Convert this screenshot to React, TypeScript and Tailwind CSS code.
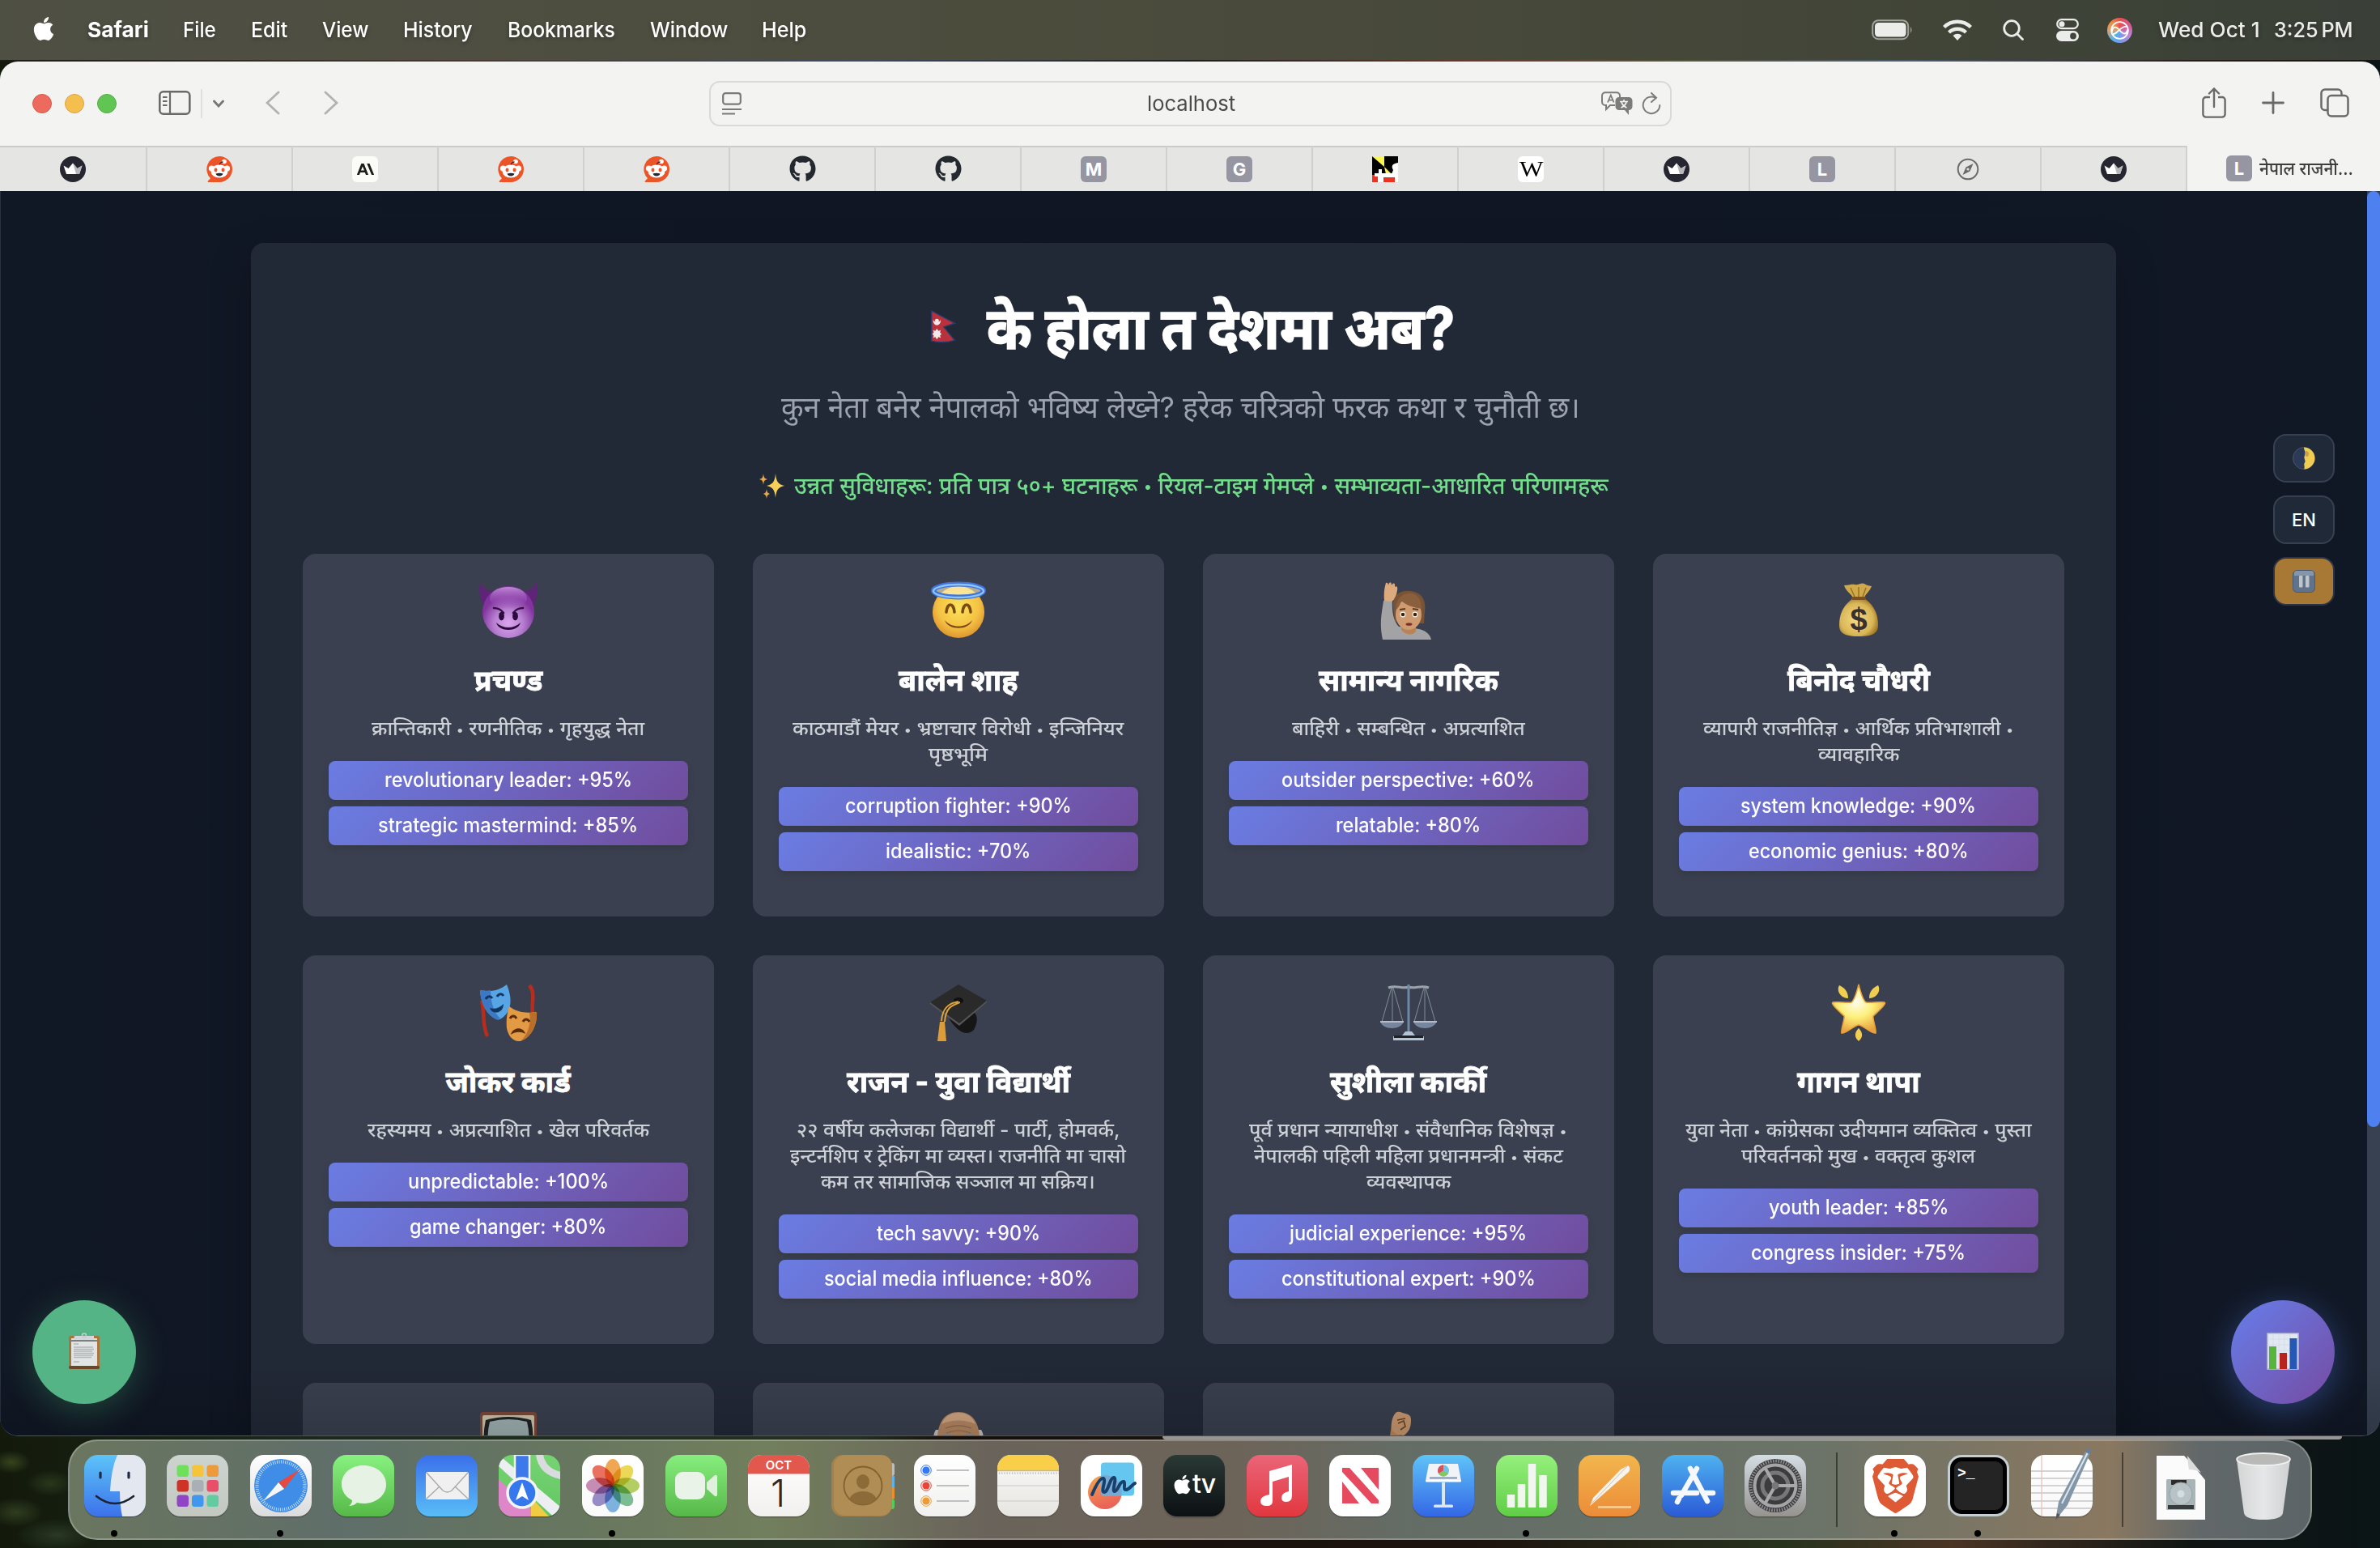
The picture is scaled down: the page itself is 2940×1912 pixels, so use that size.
import { useLayoutEffect, useRef, useState } from "react";
import type { ReactNode } from "react";
import { FaApple, FaGithub } from "react-icons/fa6";
import { SiBrave } from "react-icons/si";

/* Text stretched horizontally so that it fills an exact width. */
function Fit({ w, children, className = "" }: { w: number; children: ReactNode; className?: string }) {
  const ref = useRef<HTMLSpanElement>(null);
  const [k, setK] = useState(1);
  useLayoutEffect(() => {
    if (ref.current) setK(w / ref.current.offsetWidth);
  }, [w]);
  return (
    <span className={`inline-block whitespace-nowrap text-left ${className}`} style={{ width: w }}>
      <span ref={ref} className="inline-block origin-left" style={{ transform: `scaleX(${k})` }}>
        {children}
      </span>
    </span>
  );
}

/* Splits a line at its bullets and sets them smaller than the words. */
function Bulleted({ text }: { text: string }) {
  return (
    <>
      {text.split("•").map((part, i) => (
        <span key={i}>
          {i > 0 && <span className="align-[0.08em] text-[0.68em] leading-none">•</span>}
          {part}
        </span>
      ))}
    </>
  );
}

/* ---------- emoji ---------- */

const Devil = () => (
  <svg viewBox="0 0 72 72" className="size-[72px]">
    <defs>
      <radialGradient id="dv" cx=".5" cy=".72" r=".7">
        <stop offset="0" stopColor="#dba6ee" />
        <stop offset=".4" stopColor="#b67fd0" />
        <stop offset=".75" stopColor="#83349f" />
        <stop offset="1" stopColor="#7c2f9b" />
      </radialGradient>
      <linearGradient id="dvt" x1="0" y1="0" x2="0" y2="1">
        <stop offset="0" stopColor="#c792dd" stopOpacity=".9" />
        <stop offset="1" stopColor="#8a3cab" stopOpacity="0" />
      </linearGradient>
    </defs>
    <path d="M1 1c-2 12 0 23 6 31l16-18C13 13 5 10 1 1zM71 1c2 12 0 23-6 31L49 14c10-1 18-4 22-13z" fill="#5f2478" />
    <circle cx="36" cy="38" r="32" fill="url(#dv)" />
    <ellipse cx="36" cy="21" rx="23" ry="14" fill="url(#dvt)" />
    <path d="M18 33c4 0 9 2 12 6M54 33c-4 0-9 2-12 6" stroke="#341044" strokeWidth="2.6" fill="none" strokeLinecap="round" />
    <ellipse cx="27.500" cy="43" rx="3.400" ry="5.200" fill="#2b0b3b" />
    <ellipse cx="44.500" cy="43" rx="3.400" ry="5.200" fill="#2b0b3b" />
    <path d="M21 51c9 8 21 8 30 0-3 12-27 12-30 0z" fill="#2b0b3b" />
  </svg>
);

const Angel = () => (
  <svg viewBox="0 0 72 72" className="size-[72px] overflow-visible">
    <defs>
      <radialGradient id="an" cx=".5" cy=".4" r=".65">
        <stop offset="0" stopColor="#fbe35a" />
        <stop offset=".6" stopColor="#f5c243" />
        <stop offset="1" stopColor="#d98b2b" />
      </radialGradient>
    </defs>
    <circle cx="36" cy="38" r="32" fill="url(#an)" />
    <ellipse cx="36" cy="12.500" rx="28" ry="7" fill="#fff6c8" fillOpacity=".6" />
    <ellipse cx="36" cy="11.500" rx="31" ry="8" fill="none" stroke="#3f74dd" strokeWidth="6" />
    <ellipse cx="36" cy="12" rx="31" ry="8" fill="none" stroke="#8cc4fb" strokeWidth="2.500" />
    <path d="M21 38c1-12 9-12 10 0M41 38c1-12 9-12 10 0" fill="none" stroke="#7a4a12" strokeWidth="3.600" strokeLinecap="round" />
    <path d="M19 48c8 10 26 10 34 0-4 13-30 13-34 0z" fill="#7a4a12" />
  </svg>
);

const Raising = () => (
  <svg viewBox="0 0 72 72" className="size-[72px]">
    <path d="M4 72C-1 50 4 34 5 24h11c-1 14 2 26 8 32l18 2c12 1 20 5 22 14z" fill="#a3a3a5" />
    <path d="M6 24C5 12 7 6 8 2c2-1 3 1 3 3 1-5 4-5 4 0 2-4 5-3 4 2 2-2 4 0 3 4-1 7-3 12-7 14z" fill="#dcaa7c" />
    <path d="M27 50h18v12c-5 6-14 4-18-2z" fill="#b98358" />
    <path d="M17 34c-2-17 9-24 21-22 14 1 20 11 18 25l-1 15c-8 0-34 2-36-4z" fill="#7a5335" />
    <ellipse cx="36" cy="41" rx="16" ry="19" fill="#cf9b70" />
    <path d="M20 36c4-4 6-8 7-12 6 6 15 8 25 10C52 18 43 14 35 15c-10 1-15 10-15 21z" fill="#8a5f3d" />
    <circle cx="29" cy="41" r="3.400" fill="#fff" /><circle cx="44" cy="41" r="3.400" fill="#fff" />
    <circle cx="29" cy="41" r="2.300" fill="#3a2110" /><circle cx="44" cy="41" r="2.300" fill="#3a2110" />
    <path d="M25 35l7-1M41 34l7 1" stroke="#5c3a1f" strokeWidth="1.800" />
    <ellipse cx="36.500" cy="53" rx="4" ry="1.800" fill="#7b2f2c" />
  </svg>
);

const Money = () => (
  <svg viewBox="0 0 72 72" className="size-[72px]">
    <defs>
      <radialGradient id="mn" cx=".45" cy=".55" r=".6">
        <stop offset="0" stopColor="#f4dd86" />
        <stop offset=".7" stopColor="#d9b657" />
        <stop offset="1" stopColor="#94701f" />
      </radialGradient>
    </defs>
    <path d="M29 21C16 30 12 42 12 54c0 10 6 14 24 14s24-4 24-14c0-12-4-24-17-33z" fill="url(#mn)" />
    <path d="M18 5c6 0 8-2 13-1s9-3 12-1 5 2 9 3c-2 6-7 9-9 14H29C27 16 20 12 18 5z" fill="#cfa94c" />
    <path d="M26 8l5 11M36 7v12M45 8l-4 11" stroke="#94701f" strokeWidth="1.400" />
    <rect x="27" y="19" width="18" height="4" rx="2" fill="#7a4f21" />
    <text x="36" y="60" textAnchor="middle" fontSize="38" fontWeight="700" fontFamily="Liberation Sans, sans-serif" fill="#3a3030">$</text>
  </svg>
);

const Masks = () => (
  <svg viewBox="0 0 72 72" className="size-[72px]">
    <path d="M3 22c4 14 0 28 7 44M62 3c8 10 2 22 4 34" stroke="#b92c1c" strokeWidth="4.500" fill="none" />
    <path d="M1 9c14 3 24 0 33-7 4 10 7 22 2 32-4 8-11 13-15 11C9 39 2 26 1 9z" fill="#58a5e6" />
    <path d="M1 9c5 1 9 1 13 0 0 15 4 28 12 35-2 1-4 1-5 1C9 39 2 26 1 9z" fill="#3c78c4" />
    <path d="M8 20c2-4 6-4 8-1M22 17c2-4 6-4 8-1" stroke="#12365f" strokeWidth="3" fill="none" />
    <path d="M13 31c6 2 12 0 17-5 0 12-14 14-17 5z" fill="#12365f" />
    <path d="M37 29c9 7 20 9 34 7 1 15-6 31-20 36-9 1-15-6-17-16-1-8 0-18 3-27z" fill="#e39a45" />
    <path d="M62 37c3 0 6 0 9-1 1 15-6 31-20 36 10-9 13-22 11-35z" fill="#b96f2a" />
    <path d="M38 44c2-4 6-4 8 0M54 48c2-4 6-4 8 0" stroke="#5a2c0a" strokeWidth="3" fill="none" />
    <path d="M39 64c2-9 15-11 18-1-6-3-12-3-18 1z" fill="#5a2c0a" />
  </svg>
);

const Cap = () => (
  <svg viewBox="0 0 72 72" className="size-[72px]">
    <path d="M19 30l36 6c6 6 4 14 0 22-6 6-13 5-20-1-7-6-14-17-16-27z" fill="#161616" />
    <path d="M1 24L36 2l35 20-34 30z" fill="#2a2a2b" />
    <path d="M1 24l36 26 34-28v2L37 53 1 26z" fill="#555" />
    <ellipse cx="36" cy="22" rx="6" ry="4" fill="#111" />
    <path d="M36 23c-12 2-20 8-21 24M38 24c-12 4-18 8-19 24" stroke="#dca23b" strokeWidth="2" fill="none" />
    <path d="M13 48h6l2 24H10z" fill="#dd9c35" />
  </svg>
);

const Scales = () => (
  <svg viewBox="0 0 72 72" className="size-[72px]">
    <path d="M11 6c10-4 17 2 25-1 8 3 15-3 25 1" stroke="#9aa4ad" strokeWidth="3" fill="none" />
    <path d="M15 6L3 48M16 6l0 42M17 6l12 42M55 6L43 48M56 6v42M57 6l12 42" stroke="#8b96a0" strokeWidth=".9" />
    <path d="M36 2v62" stroke="#6f88a5" strokeWidth="3" />
    <path d="M1 47h29c-2 12-27 12-29 0zM42 47h29c-3 12-27 12-29 0z" fill="#76869f" />
    <path d="M1 47h29v2H1zM42 47h29v2H42z" fill="#b3bcc8" />
    <path d="M32 60h8l4 5 11 1v5H17v-5l11-1z" fill="#b6c3d2" /><path d="M18 65h36v3H18z" fill="#222" />
  </svg>
);

const Star = () => (
  <svg viewBox="0 0 72 72" className="size-[72px]">
    <defs>
      <radialGradient id="st" cx=".45" cy=".35" r=".65">
        <stop offset="0" stopColor="#fffdf0" />
        <stop offset=".5" stopColor="#fdf07c" />
        <stop offset="1" stopColor="#e9a13b" />
      </radialGradient>
    </defs>
    <path d="M36 2c2 8 6 20 9 22 4 1 17-1 23 0 3 2-9 12-14 17-1 4 4 16 3 21-5 1-16-10-21-10s-16 11-21 10c-1-5 4-17 3-21C13 36 1 26 4 24c6-1 19 1 23 0 3-2 7-14 9-22z" fill="url(#st)" stroke="#e9a13b" strokeWidth="1.500" />
    <path d="M12 3c7 3 11 8 11 16C14 19 8 10 12 3zM60 3c-7 3-11 8-11 16 9 0 15-9 11-16zM36 56c5 5 6 11 0 16-6-5-5-11 0-16z" fill="#f1ce4f" />
  </svg>
);

const Tv = () => (
  <svg viewBox="0 0 72 72" className="size-[72px]">
    <rect x="1" y="2" width="70" height="60" rx="4" fill="#7d4738" />
    <rect x="4" y="6" width="64" height="52" rx="2" fill="#cfc2a9" />
    <path d="M8 12q28-8 56 0 5 22 0 46H8Q3 34 8 12z" fill="#1f2426" />
    <path d="M13 14q23-6 46 0 5 20 0 44H13q-5-24 0-44z" fill="#9fb0b1" />
  </svg>
);

const OldMan = () => (
  <svg viewBox="0 0 72 72" className="size-[72px]">
    <path d="M8 24c-4 6-4 16-2 34h60c2-18 2-28-2-34z" fill="#c3c3c5" />
    <path d="M36 2C17 2 9 18 10 40s8 30 26 30 25-8 26-30S55 2 36 2z" fill="#b58863" />
    <path d="M36 3c-11 0-18 6-21 14 12-6 30-6 42 0-3-8-10-14-21-14z" fill="#d1a582" />
    <path d="M20 22c10-4 22-4 32 0M21 28c10-4 20-4 30 0" stroke="#94694a" strokeWidth="1.200" fill="none" />
    <path d="M16 34c3-4 9-4 12-1M56 34c-3-4-9-4-12-1" stroke="#8d8f92" strokeWidth="5" fill="none" />
  </svg>
);

const Fist = () => (
  <svg viewBox="0 0 72 72" className="size-[72px]">
    <path d="M15 18c-3 18-4 34-4 52h14c-1-16 2-26 6-32z" fill="#b98960" />
    <path d="M20 3c4-3 8 0 12 1 5 1 7 3 7 8 0 10-3 15-9 19-7 0-13-3-15-8-1-8 1-15 5-20z" fill="#c9986f" />
    <path d="M23 16l7-3 2 7-6 4M22 12l10-2" stroke="#6b4226" strokeWidth="1.600" fill="none" />
  </svg>
);

const Flag = () => (
  <svg viewBox="0 0 32 44" className="h-[42px] w-[32px]">
    <path d="M1 2L31 18 17 23 31 40Q16 45 1 41z" fill="#b7323c" stroke="#2a3a6b" strokeWidth="1.600" />
    <path d="M3 14q5 6 10 0c0 9-10 9-10 0z" fill="#f2e9ea" /><circle cx="8" cy="15" r="2.600" fill="#f2e9ea" />
    <path d="M8 25l2 3 3-1-1 3 2 2-2 2 1 3-3-1-2 3-2-3-3 1 1-3-2-2 2-2-1-3 3 1z" fill="#f2e9ea" />
  </svg>
);

const Sparkle = () => (
  <svg viewBox="0 0 32 32" className="size-[32px]">
    <path d="M20 1c1 10 3 13 11 15-8 2-10 5-11 15-1-10-3-13-11-15 8-2 10-5 11-15z" fill="#f5cf57" />
    <path d="M5 1c.6 5 1.400 6 5 7-3.600 1-4.400 2-5 7-.6-5-1.400-6-5-7 3.600-1 4.400-2 5-7zM9 20c.6 4 1.400 5 4 6-2.600 1-3.400 2-4 6-.6-4-1.400-5-4-6 2.600-1 3.400-2 4-6z" fill="#e9a94a" />
  </svg>
);

const Moon = () => (
  <svg viewBox="0 0 28 28" className="size-[28px]">
    <circle cx="14" cy="14" r="13.500" fill="#2b3a57" stroke="#4b5563" />
    <path d="M14 .5a13.500 13.500 0 0 1 0 27c2-3-1-5 1-8s-2-5 0-9-1-6-1-10z" fill="#f0cd52" />
    <path d="M16 5c3 0 5 2 4 5s-4 2-5 0z" fill="#c9a345" />
  </svg>
);

const Pause = () => (
  <svg viewBox="0 0 28 28" className="size-[28px]">
    <rect x=".5" y=".5" width="27" height="27" rx="5" fill="#5f738d" stroke="#465a74" />
    <path d="M2 4q0-3 3-3h18q3 0 3 3v3H2z" fill="#8696a9" />
    <rect x="8" y="7" width="4.500" height="14.500" rx="1" fill="#c0c5cc" /><rect x="16" y="7" width="4.500" height="14.500" rx="1" fill="#c0c5cc" />
  </svg>
);

const Clipboard = () => (
  <svg viewBox="0 0 40 46" className="h-[46px] w-[40px]">
    <rect x="1" y="4" width="38" height="41" rx="2.500" fill="#a9743f" />
    <rect x="1" y="41" width="38" height="4" rx="2" fill="#6d4725" />
    <rect x="4" y="7" width="32" height="34" fill="#e2e4e4" />
    <rect x="4" y="9" width="32" height="2" fill="#7c7f80" />
    <path d="M8 4h24v5H7z" fill="#d4d7d9" /><circle cx="20" cy="3.500" r="2.500" fill="none" stroke="#c8ccd0" strokeWidth="1.600" />
    <path d="M7 14h6M7 18h24M7 20.500h25M7 23h23M7 25.500h25M7 28h24M7 30.500h22M7 36h7" stroke="#b3b6b7" strokeWidth="1.300" />
  </svg>
);

const Chart = () => (
  <svg viewBox="0 0 40 46" className="h-[46px] w-[40px]">
    <rect x="1" y="1" width="38" height="44" fill="#e2e8f1" stroke="#b9bfd3" strokeWidth="1.500" />
    <path d="M1 8h38M1 15h38M1 22h38M1 29h38M8 1v44M15 1v44M22 1v44M29 1v44" stroke="#cdd6e4" strokeWidth=".6" />
    <rect x="3" y="17" width="9" height="28" fill="#57b43c" /><rect x="16" y="25" width="9" height="20" fill="#b8231b" /><rect x="28.500" y="7" width="9" height="38" fill="#2458b4" />
  </svg>
);

/* ---------- favicons ---------- */

const Crown = () => (
  <svg viewBox="0 0 32 32" className="size-[32px]">
    <circle cx="16" cy="16" r="16" fill="#262630" />
    <path d="M4.500 11.500l6 3.500L16 8.500l5.500 6.500 6-3.500L24 22H8z" fill="#fff" />
    <path d="M16 8.500l5.500 6.500 6-3.500L24 22h-4z" fill="#b9b9bd" />
  </svg>
);

const Reddit = () => (
  <svg viewBox="0 0 32 32" className="size-[32px]">
    <path d="M16 0a16 16 0 0 1 0 32H2.500c-1 0-1.200-1-.6-1.600L5 27.300A16 16 0 0 1 16 0z" fill="#eb5528" />
    <circle cx="6.500" cy="15" r="3.600" fill="#fff" /><circle cx="25.500" cy="15" r="3.600" fill="#fff" />
    <circle cx="22" cy="6.500" r="2.800" fill="#fff" />
    <path d="M16 12c0-3 2-5 4.500-5" stroke="#262630" strokeWidth="1.300" fill="none" />
    <ellipse cx="16" cy="18.500" rx="10.500" ry="8" fill="#fff" />
    <ellipse cx="11.500" cy="17" rx="2" ry="2.400" fill="#eb5528" /><ellipse cx="20.500" cy="17" rx="2" ry="2.400" fill="#eb5528" />
    <path d="M11.500 21.500q4.500-1.500 9 0c-1 4-8 4-9 0z" fill="#262630" />
  </svg>
);

const Letter = ({ c }: { c: string }) => (
  <div className="flex size-[32px] items-center justify-center rounded-[6px] bg-[#9695a2] text-[22px] leading-none font-bold text-white">{c}</div>
);

const Claude = () => (
  <div className="flex size-[32px] items-center justify-center rounded-[6px] bg-[#fbfbf8]">
    <svg viewBox="0 0 24 18" className="h-[16px] w-[23px] fill-[#1c1c1a]">
      <path d="M6.200 1h3.600L16 17h-3.500l-1.200-3.400H4.700L3.500 17H0zM8 5l-2.200 5.800h4.400zM14 1h3.600L24 17h-3.500z" />
    </svg>
  </div>
);

const Quarters = () => (
  <svg viewBox="0 0 32 32" className="size-[32px]">
    <rect width="32" height="32" fill="#fff" />
    <path d="M0 0h15v23H0z" fill="#000" /><path d="M0 0h15v13z" fill="#fdf651" />
    <path d="M15 0h17v8c-7 1-9 4-6 9l-2 5h-9z" fill="#000" /><path d="M15 13l9 9h-7z" fill="#fdf651" />
    <path d="M0 23h7v9H0zM14 26h14v6H14z" fill="#ea3323" />
    <path d="M3 21h24v4H14v7H7v-7H3zM8 16h4v6H8z" fill="#fff" />
  </svg>
);

const Wiki = () => (
  <div className="flex size-[32px] items-center justify-center rounded-[6px] bg-white font-['Liberation_Serif',serif] text-[28px] leading-none text-black">
    <Fit w={29}>W</Fit>
  </div>
);

const Compass = () => (
  <svg viewBox="0 0 28 28" className="size-[28px]" fill="none" stroke="#6b6b6a" strokeWidth="2">
    <circle cx="14" cy="14" r="12.300" />
    <path d="M20.500 7l-4 9.500L7.500 21l4-9.500z" fill="#6b6b6a" stroke="none" /><circle cx="14" cy="14" r="1.600" fill="#e4e4e2" stroke="none" />
  </svg>
);

/* ---------- page data ---------- */

type Line = [string, number];
type Leader = { icon: ReactNode; name: Line; desc: Line[]; traits: Line[] };

const leaders: Leader[] = [
  { icon: <Devil />, name: ["प्रचण्ड", 84], desc: [["क्रान्तिकारी • रणनीतिक • गृहयुद्ध नेता", 337]], traits: [["revolutionary leader: +95%", 306], ["strategic mastermind: +85%", 321]] },
  { icon: <Angel />, name: ["बालेन शाह", 147], desc: [["काठमाडौं मेयर • भ्रष्टाचार विरोधी • इन्जिनियर", 409], ["पृष्ठभूमि", 73]], traits: [["corruption fighter: +90%", 280], ["idealistic: +70%", 179]] },
  { icon: <Raising />, name: ["सामान्य नागरिक", 222], desc: [["बाहिरी • सम्बन्धित • अप्रत्याशित", 288]], traits: [["outsider perspective: +60%", 313], ["relatable: +80%", 179]] },
  { icon: <Money />, name: ["बिनोद चौधरी", 176], desc: [["व्यापारी राजनीतिज्ञ • आर्थिक प्रतिभाशाली •", 383], ["व्यावहारिक", 100]], traits: [["system knowledge: +90%", 291], ["economic genius: +80%", 272]] },
  { icon: <Masks />, name: ["जोकर कार्ड", 154], desc: [["रहस्यमय • अप्रत्याशित • खेल परिवर्तक", 348]], traits: [["unpredictable: +100%", 248], ["game changer: +80%", 243]] },
  { icon: <Cap />, name: ["राजन - युवा विद्यार्थी", 276], desc: [["२२ वर्षीय कलेजका विद्यार्थी - पार्टी, होमवर्क,", 400], ["इन्टर्नशिप र ट्रेकिंग मा व्यस्त। राजनीति मा चासो", 415], ["कम तर सामाजिक सञ्जाल मा सक्रिय।", 339]], traits: [["tech savvy: +90%", 202], ["social media influence: +80%", 332]] },
  { icon: <Scales />, name: ["सुशीला कार्की", 193], desc: [["पूर्व प्रधान न्यायाधीश • संवैधानिक विशेषज्ञ •", 393], ["नेपालकी पहिली महिला प्रधानमन्त्री • संकट", 382], ["व्यवस्थापक", 104]], traits: [["judicial experience: +95%", 293], ["constitutional expert: +90%", 314]] },
  { icon: <Star />, name: ["गागन थापा", 152], desc: [["युवा नेता • कांग्रेसका उदीयमान व्यक्तित्व • पुस्ता", 428], ["परिवर्तनको मुख • वक्तृत्व कुशल", 289]], traits: [["youth leader: +85%", 222], ["congress insider: +75%", 265]] },
];

function LeaderCard({ l }: { l: Leader }) {
  return (
    <div className="flex flex-col items-center rounded-[16px] bg-[#3a404f] px-8 pt-[34px] text-center">
      <div className="-ml-px h-[72px]">{l.icon}</div>
      <h3 className="mt-[20px] -ml-px h-[60px] text-[36px] leading-[60px] font-bold text-white [-webkit-text-stroke:0.8px_white]">
        <Fit w={l.name[1]}>{l.name[0]}</Fit>
      </h3>
      <div className="mt-[14px] mb-6 -ml-px flex flex-col items-center text-[24px] leading-[32px] font-medium text-[#cdd0d6]">
        {l.desc.map(([t, w]) => (
          <Fit key={t} w={w} className="h-8"><Bulleted text={t} /></Fit>
        ))}
      </div>
      <div className="flex w-full flex-col gap-2">
        {l.traits.map(([t, w]) => (
          <div key={t} className="flex h-12 items-center justify-center rounded-[8px] bg-[linear-gradient(135deg,#6a7de3,#714c9c)] pr-px pb-px text-[25px] leading-none font-medium text-white shadow-[0_4px_8px_rgba(0,0,0,0.12)]">
            <Fit w={w}>{t}</Fit>
          </div>
        ))}
      </div>
    </div>
  );
}

function PeekCard({ icon }: { icon: ReactNode }) {
  return <div className="flex h-[480px] justify-center rounded-[16px] bg-[#3a404f] pt-[34px]">{icon}</div>;
}

/* ---------- menu bar ---------- */

const menus: [string, number, number][] = [
  ["File", 41, 43], ["Edit", 45, 43], ["View", 57, 43], ["History", 86, 43], ["Bookmarks", 133, 43], ["Window", 96, 42], ["Help", 55, 0],
];

function MenuBar() {
  return (
    <div className="flex h-[74px] shrink-0 items-center justify-between bg-[linear-gradient(90deg,#4f5044,#4c4c3d_45%,#434638_75%,#3a4037)] pr-[33px] pl-[40px] text-[26px] leading-none font-medium text-white [text-shadow:0_2px_5px_rgba(0,0,0,0.35)]">
      <div className="flex items-center">
        <FaApple className="mb-[4px] size-[33px] w-[28px]" />
        <Fit w={76} className="ml-[40px] font-bold">Safari</Fit>
        <div className="ml-[42px] flex">
          {menus.map(([t, w, g]) => (
            <div key={t} className="flex"><Fit w={w}>{t}</Fit><div style={{ width: g }} /></div>
          ))}
        </div>
      </div>
      <div className="flex items-center text-[#ececea]">
        <svg viewBox="0 0 52 26" className="h-[26px] w-[52px]">
          <rect x="1.200" y="1.200" width="44" height="23" rx="7" fill="none" stroke="#a3a49d" strokeWidth="2" />
          <rect x="4" y="4" width="38.500" height="17.500" rx="4.500" fill="#ececea" /><path d="M48 9q3 4 0 8z" fill="#a3a49d" />
        </svg>
        <svg viewBox="0 0 36 26" className="ml-[36px] h-[26px] w-[36px]" fill="none" stroke="#ececea" strokeWidth="4.400">
          <path d="M1.500 9.500a23.500 23.500 0 0 1 33 0" /><path d="M7.500 16a15 15 0 0 1 21 0" /><path d="M12.500 20a8 8 0 0 1 11 0L18 26z" fill="#ececea" stroke="none" />
        </svg>
        <svg viewBox="0 0 26 26" className="ml-[38px] size-[26px]" fill="none" stroke="#ececea" strokeWidth="2.800" strokeLinecap="round">
          <circle cx="11" cy="11" r="9.300" /><path d="M18 18l6.500 6.500" />
        </svg>
        <svg viewBox="0 0 28 28" className="ml-[40px] size-[28px]">
          <rect x="1.200" y="1.200" width="25.600" height="11" rx="5.500" fill="none" stroke="#ececea" strokeWidth="2.200" /><circle cx="7" cy="6.700" r="3.500" fill="#ececea" />
          <rect y="15" width="28" height="13" rx="6.500" fill="#ececea" /><circle cx="21" cy="21.500" r="3.900" fill="#42463a" />
        </svg>
        <div className="ml-[35px] size-[31px] rounded-full bg-[conic-gradient(from_0deg,#e8504e,#d9568e_60deg,#b787dc_120deg,#6f9fe8_180deg,#55b4ea_220deg,#d9a36f_270deg,#ee9146_310deg,#e8504e)] p-[4px]">
          <svg viewBox="0 0 23 23" className="size-[23px]" fill="none" stroke="#fff" strokeWidth="1.800">
            <circle cx="11.500" cy="11.500" r="10.300" /><path d="M2 13c1-7 5-7 9.500-1.500S20 17 21 10.500M3 16c5 1 9-10 17-9" />
          </svg>
        </div>
        <Fit w={126} className="ml-[32px]">Wed Oct 1</Fit>
        <Fit w={98} className="ml-[17px] [word-spacing:-3px]">3:25 PM</Fit>
      </div>
    </div>
  );
}

/* ---------- Safari chrome ---------- */

function Toolbar() {
  return (
    <div className="flex h-[104px] shrink-0 items-center bg-[#f3f3f1]">
      <div className="flex w-[876px] items-center pl-[40px]">
        <div className="flex gap-4">
          <div className="size-6 rounded-full border border-[#d9584c] bg-[#ec6a5e]" />
          <div className="size-6 rounded-full border border-[#dba43f] bg-[#f4bf4f]" />
          <div className="size-6 rounded-full border border-[#50ad44] bg-[#61c554]" />
        </div>
        <svg viewBox="0 0 40 30" className="mb-[2px] ml-[52px] h-[30px] w-[40px]" fill="none" stroke="#6a6a68" strokeWidth="2.600">
          <rect x="1.300" y="1.300" width="37" height="27.400" rx="4.500" /><path d="M14 1v28M5 8h5.500M5 13h5.500M5 18h5.500" strokeWidth="2.200" />
        </svg>
        <div className="ml-[12px] h-[36px] w-[2px] bg-[#dfdfdd]" />
        <svg viewBox="0 0 14 10" className="ml-[13px] h-[10px] w-[14px]" fill="none" stroke="#757573" strokeWidth="2.800" strokeLinecap="round"><path d="M1.500 2L7 8l5.500-6" /></svg>
        <svg viewBox="0 0 18 30" className="mb-[2px] ml-[51px] h-[30px] w-[18px]" fill="none" stroke="#b2b2b0" strokeWidth="2.800" strokeLinecap="round"><path d="M16 2L2 15l14 13" /></svg>
        <svg viewBox="0 0 18 30" className="mb-[2px] ml-[54px] h-[30px] w-[18px]" fill="none" stroke="#b2b2b0" strokeWidth="2.800" strokeLinecap="round"><path d="M2 2l14 13L2 28" /></svg>
      </div>
      <div className="flex h-[56px] w-[1189px] items-center justify-between rounded-[13px] border-2 border-[#d9d9d7] pr-[11px] pl-[14px]">
        <svg viewBox="0 0 24 28" className="mr-[52px] h-[28px] w-[24px]" fill="none" stroke="#7a7a78" strokeWidth="2.200">
          <rect x="1.200" y="1.200" width="21.600" height="13.500" rx="3" /><path d="M0 21h24M0 26.500h16" />
        </svg>
        <Fit w={109} className="mr-[3px] text-[26px] leading-none text-[#4b4b4a]">localhost</Fit>
        <div className="flex items-center">
          <svg viewBox="0 0 40 30" className="h-[30px] w-[40px]">
            <path d="M5 1.200h14a4 4 0 0 1 4 4V9M17 17h-6l-5 5v-5H5a4 4 0 0 1-4-4V5.200a4 4 0 0 1 4-4" fill="none" stroke="#7c7c7a" strokeWidth="2" />
            <path d="M8 13.500l3.800-9 3.800 9M9.200 10.600h5.200" fill="none" stroke="#7c7c7a" strokeWidth="1.800" />
            <path d="M22 7h12a4.500 4.500 0 0 1 4.500 4.500v7A4.500 4.500 0 0 1 34 23v6l-5-6h-7a4.500 4.500 0 0 1-4.500-4.500v-7A4.500 4.500 0 0 1 22 7z" fill="#7c7c7a" />
            <path d="M23 12.500h10M28 10v2.500M24.500 20c4-2 6-4 6.500-7M25 13c1 3.500 3 5.500 6.500 7" fill="none" stroke="#f3f3f1" strokeWidth="1.700" />
          </svg>
          <svg viewBox="0 0 24 28" className="ml-[10px] h-[28px] w-[24px]" fill="none" stroke="#7c7c7a" strokeWidth="2" strokeLinecap="round">
            <path d="M17 6.800A10.300 10.300 0 1 0 22.300 16" /><path d="M12 1l6 5.700-6 5.300" />
          </svg>
        </div>
      </div>
      <div className="flex w-[875px] items-center justify-end pr-[38px] pb-[2px]">
        <svg viewBox="0 0 30 38" className="h-[38px] w-[30px]" fill="none" stroke="#6a6a68" strokeWidth="2.400" strokeLinecap="round">
          <path d="M9 12H5a3.600 3.600 0 0 0-3.600 3.600V33A3.600 3.600 0 0 0 5 36.600h20a3.600 3.600 0 0 0 3.600-3.600V15.600A3.600 3.600 0 0 0 25 12h-4M15 24V2M9 7.500L15 1.500l6 6" />
        </svg>
        <svg viewBox="0 0 28 28" className="ml-[44px] size-[28px]" fill="none" stroke="#6a6a68" strokeWidth="2.800" strokeLinecap="round"><path d="M14 1.500v25M1.500 14h25" /></svg>
        <svg viewBox="0 0 36 36" className="ml-[44px] size-[36px]" fill="none" stroke="#6a6a68" strokeWidth="2.500">
          <rect x="9.500" y="9" width="25" height="25.500" rx="4.500" /><path d="M9 27H6a4.500 4.500 0 0 1-4.500-4.500V6A4.500 4.500 0 0 1 6 1.500h16A4.500 4.500 0 0 1 26.500 6v2.500" />
        </svg>
      </div>
    </div>
  );
}

const Hub = () => <FaGithub className="size-[33px] text-[#24292f]" />;

function TabStrip() {
  const tabs = [<Crown />, <Reddit />, <Claude />, <Reddit />, <Reddit />, <Hub />, <Hub />, <Letter c="M" />, <Letter c="G" />, <Quarters />, <Wiki />, <Crown />, <Letter c="L" />, <Compass />, <Crown />];
  return (
    <div className="flex h-[56px] shrink-0 bg-[#f3f3f1]">
      {tabs.map((t, i) => (
        <div key={i} className="flex w-[180px] items-center justify-center border-t-2 border-r-2 border-t-[#cbcbc9] border-r-[#d0d0ce] bg-[#e5e5e3] pb-[1px] first:w-[182px]">{t}</div>
      ))}
      <div className="flex w-[238px] items-center pl-[48px] text-[22px] leading-[40px] font-medium text-[#3c3c3b]">
        <Letter c="L" />
        <Fit w={116} className="ml-[9px] h-[40px]">नेपाल राजनी…</Fit>
      </div>
    </div>
  );
}

function Page() {
  return (
    <div className="relative flex h-[1538px] bg-[#111825]">
      <div className="flex w-[2924px] justify-center overflow-hidden bg-[linear-gradient(90deg,#2a3140_1px,#111825_1px,#101623_50%,#111825)] pt-[64px]">
        <div className="h-[2400px] w-[2304px] shrink-0 rounded-[16px] bg-[linear-gradient(90deg,#222936,#212836)] px-[64px] shadow-[0_20px_50px_rgba(0,0,0,0.25)]">
          <h1 className="flex h-[120px] items-start pt-[52px] pl-[775px] text-[72px] leading-[120px] font-bold text-white [-webkit-text-stroke:1.6px_white]">
            <div className="mt-[30px] leading-none"><Flag /></div>
            <Fit w={578} className="-mt-[7px] ml-[38px] h-[120px]">के होला त देशमा अब?</Fit>
          </h1>
          <p className="flex h-[114px] justify-center pt-[53px] text-[36px] leading-[60px] text-[#9ca3af]">
            <Fit w={987} className="mr-[7px]">कुन नेता बनेर नेपालको भविष्य लेख्ने? हरेक चरित्रको फरक कथा र चुनौती छ।</Fit>
          </p>
          <p className="flex h-[90px] items-center justify-center gap-[11px] pt-[42px] text-[28px] leading-[48px] font-medium text-[#73dd8b]">
            <Sparkle />
            <Fit w={1006} className="-mr-px h-12"><Bulleted text="उन्नत सुविधाहरू: प्रति पात्र ५०+ घटनाहरू • रियल-टाइम गेमप्ले • सम्भाव्यता-आधारित परिणामहरू" /></Fit>
          </p>
          <div className="mt-[60px] grid grid-cols-4 grid-rows-[448px_480px_480px] gap-12">
            {leaders.map((l) => (
              <LeaderCard key={l.name[0]} l={l} />
            ))}
            <PeekCard icon={<Tv />} />
            <PeekCard icon={<OldMan />} />
            <PeekCard icon={<Fist />} />
          </div>
        </div>
      </div>
      <div className="w-4 bg-[#374151]">
        <div className="h-[1156px] rounded-[8px] bg-[#4f80ef]" />
      </div>
      <div className="absolute inset-x-0 bottom-0 h-[90px] rounded-b-[22px] border-b border-[#4b5260] bg-gradient-to-b from-transparent to-black/15" />

      <div className="absolute top-[300px] right-[56px] flex flex-col gap-4">
        <div className="flex h-[60px] w-[76px] items-center justify-center rounded-[16px] border-2 border-[#374151] bg-[#1f2937]"><Moon /></div>
        <div className="flex h-[60px] w-[76px] items-center justify-center rounded-[16px] border-2 border-[#374151] bg-[#1f2937] text-[22px] leading-none font-medium text-white"><Fit w={30}>EN</Fit></div>
        <div className="flex h-[60px] w-[76px] items-center justify-center rounded-[16px] border-2 border-[#2c3547] bg-[#a87835]"><Pause /></div>
      </div>
      <div className="absolute bottom-[40px] left-[40px] flex size-[128px] items-center justify-center rounded-full bg-[#54b486] pb-[2px] shadow-[0_8px_40px_rgba(72,187,120,0.3)]"><Clipboard /></div>
      <div className="absolute right-[56px] bottom-[40px] flex size-[128px] items-center justify-center rounded-full bg-[linear-gradient(135deg,#667eea,#764ba2)] pb-[2px] shadow-[0_8px_40px_rgba(79,128,239,0.4)]"><Chart /></div>
    </div>
  );
}

/* ---------- dock ---------- */

function Tile({ a, b, id, children }: { a: string; b: string; id: string; children?: ReactNode }) {
  return (
    <svg viewBox="0 0 76 76" className="size-[76px] overflow-visible">
      <defs>
        <linearGradient id={`g${id}`} x1="0" y1="0" x2="0" y2="1"><stop offset="0" stopColor={a} /><stop offset="1" stopColor={b} /></linearGradient>
        <clipPath id={`c${id}`}><rect width="76" height="76" rx="17" /></clipPath>
      </defs>
      <rect y="1.500" width="76" height="76" rx="17" fill="#000" opacity=".22" />
      <g clipPath={`url(#c${id})`}>
        <rect width="76" height="76" fill={`url(#g${id})`} />
        {children}
      </g>
    </svg>
  );
}

const padColors = ["#6fe05a", "#f3c43c", "#ec9a3a", "#cf3327", "#a9afb5", "#e8506a", "#8f45c4", "#3f98ee", "#62cba0"];
const petals = ["#ee9a36", "#e9d33a", "#a9c94a", "#67b583", "#6aa8dd", "#8a7bc0", "#c07aa8", "#e65a45"];

const Finder = () => (
  <Tile a="#5cc4f8" b="#3c72ea" id="finder">
    <path d="M41 0h35v76H47q-3-14-3-31H32Q33 18 41 0z" fill="#e3e7ef" />
    <path d="M20 22v6M55 22v6" stroke="#1d2b46" strokeWidth="3.200" strokeLinecap="round" />
    <path d="M15 51q23 18 46 0" stroke="#1c2230" strokeWidth="2.600" fill="none" strokeLinecap="round" />
  </Tile>
);
const Launchpad = () => (
  <Tile a="#cdd3cf" b="#c3c9c1" id="lp">
    {padColors.map((c, i) => <rect key={c} x={12.500 + (i % 3) * 18.500} y={12.500 + Math.floor(i / 3) * 18.500} width="14.500" height="14.500" rx="3.600" fill={c} />)}
  </Tile>
);
const SafariIcon = () => (
  <Tile a="#ffffff" b="#dcdcdc" id="sf">
    <circle cx="38" cy="38" r="33" fill="#3f8de6" />
    <circle cx="38" cy="38" r="29.500" fill="none" stroke="#d8ebff" strokeWidth="4" strokeDasharray=".8 1.774" />
    <path d="M61 18L42 42l-7-8z" fill="#e5493f" /><path d="M16 57l19-23 7 8z" fill="#f4f6f8" />
  </Tile>
);
const Messages = () => (
  <Tile a="#87f180" b="#56b948" id="ms">
    <path d="M38 13c16 0 28 10 28 23.500S54 60 38 60q-4 0-8-1-4 4-10 4 4-3 4-7c-8-4-13-11-13-19.500C11 23 22 13 38 13z" fill="#e6f3e4" />
  </Tile>
);
const Mail = () => (
  <Tile a="#3a70ea" b="#59bdf7" id="ml">
    <rect x="12" y="21" width="53" height="34" rx="2.500" fill="#f0f0f0" />
    <path d="M13 22l20 22q5.500 4 11 0l20-22M13 54l16-15M64 54L48 39" fill="none" stroke="#a9a9a9" strokeWidth="1.400" />
  </Tile>
);
const Maps = () => (
  <Tile a="#76d372" b="#63c763" id="mp">
    <path d="M0 30L50 76H0z" fill="#dd86c8" /><path d="M0 14L76 84v-20L0 0z" fill="#edeef1" /><path d="M40 76V52l22 24z" fill="#f2cb45" />
    <path d="M20 0h18v50H20z" fill="#3d79ea" stroke="#f3f4f6" strokeWidth="2.500" />
    <path d="M50-4q2 26 30 30" stroke="#d9dbdf" strokeWidth="9" fill="none" />
    <circle cx="29" cy="47" r="18" fill="#3578ee" stroke="#f3f4f6" strokeWidth="3.500" /><path d="M29 34l8 22-8-5-8 5z" fill="#fff" />
  </Tile>
);
const Photos = () => (
  <Tile a="#ffffff" b="#fafafa" id="ph">
    {petals.map((c, i) => <ellipse key={c} cx="38" cy="21.500" rx="9.800" ry="16.500" fill={c} opacity=".86" transform={`rotate(${i * 45} 38 38)`} className="mix-blend-multiply" />)}
  </Tile>
);
const FaceTime = () => (
  <Tile a="#86ee7e" b="#57b848" id="ft">
    <rect x="12" y="21" width="37" height="34" rx="9" fill="#e9f3e8" /><path d="M51 34l10-9q3-1 3 2v22q0 3-3 2l-10-9z" fill="#e0efde" />
  </Tile>
);
const Calendar = () => (
  <Tile a="#ffffff" b="#f2f0ee" id="cal">
    <rect width="76" height="23.500" fill="#e2584d" />
    <text x="38" y="18" textAnchor="middle" fontSize="15" fontWeight="600" fontFamily="Inter, sans-serif" fill="#fff">OCT</text>
    <text x="37" y="64" textAnchor="middle" fontSize="46" fontWeight="300" fontFamily="Inter, sans-serif" fill="#2a2a2a">1</text>
  </Tile>
);
const Contacts = () => (
  <svg viewBox="0 0 76 76" className="size-[76px] overflow-visible">
    <rect x="60" y="10" width="18" height="16" rx="3" fill="#bdbdbd" /><rect x="60" y="26" width="18" height="15" fill="#5fb1e6" /><rect x="60" y="41" width="18" height="13" fill="#e8902f" /><rect x="60" y="54" width="18" height="13" rx="3" fill="#59c95c" />
    <rect width="75" height="76" rx="14" fill="#a3814b" /><rect x="3" width="72" height="75" rx="14" fill="#b08d54" />
    <circle cx="39" cy="38" r="23.500" fill="none" stroke="#82622f" strokeWidth="1.800" /><ellipse cx="39" cy="33" rx="8" ry="9" fill="#8c6b39" />
    <path d="M22 54q5-9 17-9t17 9q-7 7.500-17 7.500T22 54z" fill="#8c6b39" />
  </svg>
);
const Reminders = () => (
  <Tile a="#ffffff" b="#f0f0ee" id="rm">
    {["#3478f6", "#e6453a", "#ee9a36"].map((c, i) => (
      <g key={c}><circle cx="15" cy={19 + i * 19} r="4.600" fill={c} /><circle cx="15" cy={19 + i * 19} r="6.300" fill="none" stroke={c} strokeWidth="1" /><path d={`M28 ${19 + i * 19}h40`} stroke="#bfbfc4" strokeWidth="1.800" /></g>
    ))}
  </Tile>
);
const Notes = () => (
  <Tile a="#fafaf9" b="#e6e5e0" id="nt">
    <rect width="76" height="19.500" fill="#f9cf4a" /><path d="M0 19.500h76" stroke="#c5b98c" strokeWidth="1.500" /><path d="M2 22.500h74" stroke="#b3b3ae" strokeWidth="1.800" strokeDasharray="1.200 2" />
    <path d="M0 38h76M0 57h76" stroke="#d5d5d8" strokeWidth="1.500" />
  </Tile>
);
const Freeform = () => (
  <Tile a="#ffffff" b="#ffffff" id="ff">
    <defs><linearGradient id="ffc" x1="0" y1="0" x2=".3" y2="1"><stop offset="0" stopColor="#f4a850" /><stop offset="1" stopColor="#ea6358" /></linearGradient></defs>
    <circle cx="30" cy="46" r="21" fill="url(#ffc)" /><rect x="25" y="9.500" width="41" height="41" rx="4" fill="#58c2ef" opacity=".92" />
    <path d="M30 25a21 21 0 0 1 20 25H29a4 4 0 0 1-4-4V26z" fill="#7fa3cf" opacity=".75" />
    <path d="M14 49c5-12 10-21 14-20 4 2-4 17 1 17s7-18 12-18c4 1-3 17 1 17s6-13 11-12c3 1-1 9 2 10 4 1 7-5 12-8" stroke="#17406b" strokeWidth="4" fill="none" strokeLinecap="round" />
  </Tile>
);
const AppleTv = () => (
  <div className="flex size-[76px] items-center justify-center rounded-[17px] bg-gradient-to-b from-[#2b3a36] to-[#0c1012] pb-[1px] text-[32px] leading-none font-medium tracking-tight text-white shadow-[0_2px_2px_rgba(0,0,0,0.2)]">
    <FaApple className="mr-[1px] mb-[2px] size-[27px] w-[23px]" />
    <span className="-mt-[3px]">tv</span>
  </div>
);
const Music = () => (
  <Tile a="#ea6578" b="#e2373f" id="mu">
    <path d="M28 20l28-8v38q0 8-7 8-6 0-6-5 0-6 9-8V27l-20 6v24q0 6-7 6-8 0-8-6 0-6 11-8z" fill="#fff" />
  </Tile>
);
const News = () => (
  <Tile a="#ffffff" b="#ffffff" id="nw">
    <path d="M16 16h9l36 40v4h-9L16 21zM16 33v27h21zM39 16h22v27z" fill="#e64a5e" />
  </Tile>
);
const Keynote = () => (
  <Tile a="#5fc4f8" b="#3467e6" id="kn">
    <path d="M20 11h36l4 21H16z" fill="#f1f3f6" /><rect x="16" y="31" width="44" height="2.600" rx="1" fill="#fff" /><path d="M21 28.500h34" stroke="#7b93b5" strokeWidth="1.800" />
    <circle cx="38" cy="19.500" r="7" fill="#6cc4e6" /><path d="M38 12.500a7 7 0 0 0-6 10.500l6-3.500z" fill="#dd4f5b" /><path d="M32 23a7 7 0 0 0 12 0l-6-3.500z" fill="#88c660" />
    <path d="M38 34v28" stroke="#dfe6ee" strokeWidth="4" /><rect x="26" y="61.500" width="24" height="3.500" rx="1.500" fill="#dfe6ee" />
  </Tile>
);
const Numbers = () => (
  <Tile a="#95f07c" b="#60cd47" id="nb">
    <path d="M18.500 49v16M31.500 36v29M44.500 11v54M58 25v40" stroke="#f1f7ef" strokeWidth="9.500" />
  </Tile>
);
const Pages = () => (
  <Tile a="#f2b64d" b="#ec8c38" id="pg">
    <path d="M61 13q4 3 1 8L22 56l-8 7 4-10L52 18z" fill="#f7f3ee" /><path d="M61 13L16 60" stroke="#cdbfae" strokeWidth="1" /><path d="M24 64.500h41" stroke="#f8cf96" strokeWidth="2.600" />
  </Tile>
);
const AppStore = () => (
  <Tile a="#4fb2f0" b="#2a5bd6" id="as">
    <path d="M35 17l21 40M43 17L24 50M14 47h29M52 47h11M21 54l-2 4" stroke="#f5f8fc" strokeWidth="6.500" strokeLinecap="round" />
  </Tile>
);
const Settings = () => (
  <Tile a="#d3dde4" b="#96938f" id="se">
    <circle cx="38" cy="38" r="33" fill="#3c3c3e" /><circle cx="38" cy="38" r="30.500" fill="none" stroke="#8e8e90" strokeWidth="4" strokeDasharray="1.600 1.594" />
    <circle cx="38" cy="38" r="25.500" fill="none" stroke="#a5a5a7" strokeWidth="4" /><circle cx="38" cy="38" r="16" fill="none" stroke="#77777a" strokeWidth="5" />
    <path d="M38 38h26M38 38L25 15.500M38 38L25 60.500" stroke="#a8a8aa" strokeWidth="4" /><circle cx="38" cy="38" r="4.500" fill="#77777a" />
  </Tile>
);
const Brave = () => (
  <div className="flex size-[76px] items-center justify-center rounded-[17px] bg-white shadow-[0_2px_2px_rgba(0,0,0,0.2)]"><SiBrave className="size-[67px] text-[#dd5a35]" /></div>
);
const Terminal = () => (
  <div className="flex size-[76px] items-start rounded-[17px] border-[3px] border-[#c3cfd3] bg-[#242424] shadow-[inset_0_0_0_5px_#000] pt-[11px] pl-[9px] font-['Liberation_Mono',monospace] text-[18px] leading-none font-bold text-white">&gt;_</div>
);
const TextEdit = () => (
  <div className="relative size-[76px]">
    <Tile a="#ffffff" b="#f8f8f8" id="te"><path d="M0 20h76M0 29h76M0 38h76M0 47h76M0 57h76M0 66h76" stroke="#c6c6c6" strokeWidth="1.400" /><path d="M13 0v76" stroke="#efbdb5" strokeWidth="1.200" /></Tile>
    <svg viewBox="0 0 50 92" className="absolute -top-[8px] left-[28px] h-[92px] w-[50px]">
      <path d="M39 4l6 2L17 70 2 89l4-23z" fill="#8396a8" /><path d="M42 5L10 68" stroke="#dbe5ee" strokeWidth="2" /><path d="M2 89l2-9 4 2z" fill="#555" /><path d="M42 0l4 2-2 5-4-2z" fill="#5d7fa8" />
    </svg>
  </div>
);
const DiskDoc = () => (
  <svg viewBox="0 0 60 80" className="h-[80px] w-[60px]">
    <path d="M0 0h34q6 6 12 13t14 17v49H0z" fill="#fbfbfb" /><path d="M38 0q1 12 2 17 8 0 15 4z" fill="#dcdcdc" />
    <rect x="12" y="29" width="36" height="38" rx="1.500" fill="#a7b4b8" /><rect x="18" y="30" width="19" height="6" fill="#2b2b2b" /><circle cx="30" cy="47" r="14" fill="#b7c3c6" stroke="#94a1a5" /><circle cx="30" cy="47" r="4.500" fill="#d5dddf" /><rect x="14" y="61" width="32" height="5" fill="#3a3a3a" />
  </svg>
);
const Trash = () => (
  <svg viewBox="0 0 68 84" className="h-[84px] w-[68px]">
    <defs><linearGradient id="tr" x1="0" x2="1"><stop offset="0" stopColor="#d3d4d4" /><stop offset=".5" stopColor="#e6e7e8" /><stop offset="1" stopColor="#cfd0d1" /></linearGradient></defs>
    <path d="M1 9l9 66q2 8 24 8t24-8l9-66z" fill="url(#tr)" /><ellipse cx="34" cy="8.500" rx="33" ry="7.500" fill="#b9bab8" stroke="#f0f0f0" strokeWidth="1.800" />
  </svg>
);

const mainApps: [ReactNode, boolean][] = [
  [<Finder />, true], [<Launchpad />, false], [<SafariIcon />, true], [<Messages />, false], [<Mail />, false], [<Maps />, false], [<Photos />, true], [<FaceTime />, false], [<Calendar />, false], [<Contacts />, false], [<Reminders />, false], [<Notes />, false], [<Freeform />, false], [<AppleTv />, false], [<Music />, false], [<News />, false], [<Keynote />, false], [<Numbers />, true], [<Pages />, false], [<AppStore />, false], [<Settings />, false],
];
const extraApps: [ReactNode, boolean][] = [[<Brave />, true], [<Terminal />, true], [<TextEdit />, false]];

function DockItem({ icon, running }: { icon: ReactNode; running: boolean }) {
  return (
    <div className="flex h-full w-[76px] flex-col items-center pt-[17px]">
      {icon}
      {running && <div className="mt-[17px] mr-[2px] size-[8px] rounded-full bg-black" />}
    </div>
  );
}

function Dock() {
  return (
    <div className="ml-[84px] flex h-[124px] w-[2772px] rounded-[36px] border-2 border-white/25 bg-[linear-gradient(90deg,#6b765f,#5f6e69_12%,#66765f_22%,#727f5d_31%,#6a635b_41%,#6d6459_52%,#636d66_60%,#6c7368_78%,#8a7860_91%,#626869_95%,#5c6467)] pl-[17.5px]">
      <div className="flex w-[2128px] justify-between">
        {mainApps.map(([icon, r], i) => <DockItem key={i} icon={icon} running={r} />)}
      </div>
      <div className="mt-[14px] mr-[33px] ml-[36.5px] h-[92px] w-[2px] bg-black/45" />
      <div className="flex w-[282px] justify-between">
        {extraApps.map(([icon, r], i) => <DockItem key={i} icon={icon} running={r} />)}
      </div>
      <div className="mt-[14px] mr-[41px] ml-[36px] h-[92px] w-[2px] bg-black/45" />
      <div className="pt-[18px]"><DiskDoc /></div>
      <div className="pt-[14px] pl-[38px]"><Trash /></div>
    </div>
  );
}

export default function App() {
  return (
    <div className="flex h-[1912px] w-[2940px] flex-col overflow-hidden bg-[radial-gradient(ellipse_24px_14px_at_14px_1806px,#36441d,transparent),radial-gradient(ellipse_30px_16px_at_62px_1832px,#2a371b,transparent),radial-gradient(ellipse_34px_18px_at_20px_1868px,#303d1f,transparent),radial-gradient(ellipse_50px_20px_at_70px_1896px,#2a3824,transparent),linear-gradient(90deg,#131a0c,#1c2a1c_15%,#25301f_36%,#15100c_40%,#1d130e_62%,#27321d_75%,#4a3424_82%,#101513_92%,#0b1416)] font-['Inter','Noto_Sans','Noto_Sans_Devanagari','Lohit_Devanagari',sans-serif]">
      <MenuBar />
      <div className="h-[2px] shrink-0 bg-[linear-gradient(90deg,#1c1a14,#4a3a30_20%,#3d4d60_36%,#1d1c1c_50%,#6a3a2c_62%,#57563a_70%,#4d5d70_80%,#2a1c18_92%,#15130f)]" />
      <div className="flex h-[1698px] shrink-0 flex-col overflow-hidden rounded-[22px]">
        <Toolbar />
        <TabStrip />
        <Page />
      </div>
      <div className="ml-[1436px] h-[4px] w-[1457px] shrink-0 rounded-b-[4px] bg-[#979694]" />
      <Dock />
    </div>
  );
}
